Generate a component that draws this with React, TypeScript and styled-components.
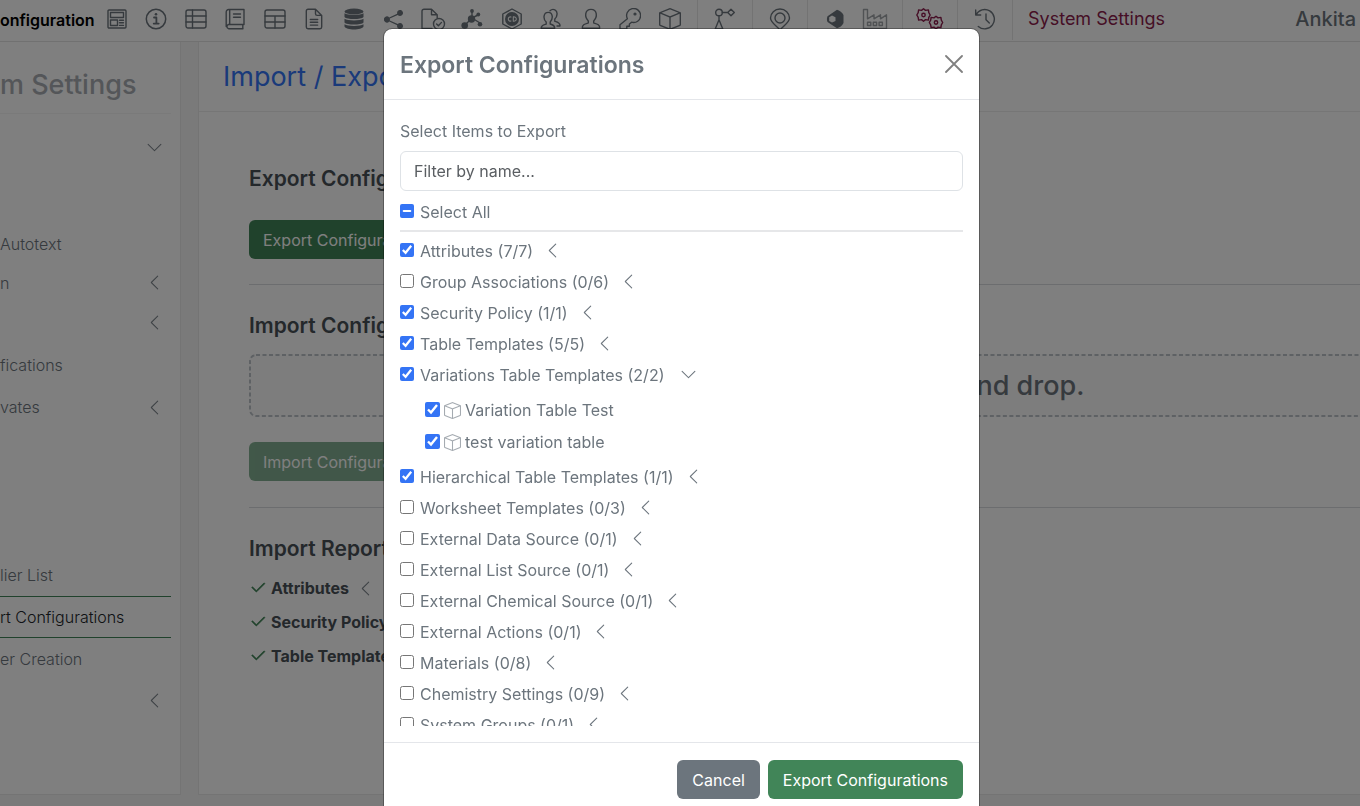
import React, { useEffect, useRef, useState } from 'react';
import styled, { createGlobalStyle } from 'styled-components';
import { BsBox, BsCheck2, BsChevronDown, BsChevronLeft, BsShareFill } from 'react-icons/bs';

const c = {
  text: '#6c757d',
  dark: '#495057',
  green: '#418558',
  blue: '#3474f5',
  maroon: '#8c1d4c',
  line: '#e4e6ea',
};

const GlobalStyle = createGlobalStyle`
  *, *::before, *::after { box-sizing: border-box; }
  html, body { margin: 0; height: 100%; overflow: hidden; }
  body { font-family: Inter, "Liberation Sans", sans-serif; font-size: 16px; line-height: 24px; color: ${c.text}; background: #f5f5f5; }
  #root { height: 100%; }
  button, input { font: inherit; }
  h1, h2, h3, p, ul { margin: 0; padding: 0; }
  ul { list-style: none; }
`;

const Page = styled.div`
  display: flex;
  flex-direction: column;
  height: 100vh;
  overflow: hidden;
`;

const TopBar = styled.header`
  display: flex;
  align-items: flex-start;
  height: 42px;
  flex: none;
  background: #fff;
  border-bottom: 1px solid #e3e3e3;
`;

const Brand = styled.strong`
  width: 97px;
  padding-top: 8px;
  font-size: 16px;
  font-weight: 600;
  color: #000;
  white-space: nowrap;
`;

const IconGroup = styled.nav<{ $pad?: number }>`
  display: flex;
  height: 40px;
  padding: 0 ${p => p.$pad ?? 0}px;
  border-right: 1px solid #e6e6e6;
`;

const ToolGroup = styled(IconGroup)`
  width: 601px;
  flex: none;
  justify-content: space-between;
  padding-right: 8px;
`;

const IconButton = styled.button<{ $color?: string; $width?: number }>`
  display: flex;
  align-items: center;
  justify-content: center;
  width: ${p => p.$width ?? 39}px;
  height: 38px;
  padding: 0;
  border: 0;
  background: none;
  color: ${p => p.$color ?? c.text};
  flex: none;
`;

const SectionName = styled.a`
  padding: 7px 0 0 15px;
  font-size: 18px;
  color: ${c.maroon};
  text-decoration: none;
`;

const UserName = styled.span`
  margin-left: auto;
  padding: 7px 4px 0 0;
  font-size: 20px;
  font-weight: 500;
`;

const Columns = styled.div`
  display: flex;
  flex: 1;
  gap: 17px;
  padding-bottom: 11px;
  min-height: 0;
`;

const Sidebar = styled.aside`
  width: 181px;
  flex: none;
  background: #fff;
  border: solid #e9e9e9;
  border-width: 0 1px 1px 0;
  overflow: hidden;
`;

const SidebarTitle = styled.h2`
  height: 72px;
  margin-right: 9px;
  padding-top: 26px;
  border-bottom: 1px solid #f4f4f4;
  font-size: 27px;
  line-height: 34px;
  font-weight: 500;
  color: #a9adb3;
  white-space: nowrap;
`;

const SideRow = styled.li<{ $height?: number; $active?: boolean }>`
  display: flex;
  align-items: center;
  justify-content: space-between;
  height: ${p => p.$height ?? 42}px;
  margin-right: 9px;
  padding-right: 8px;
  border: solid ${p => (p.$active ? c.green : 'transparent')};
  border-width: 1px 0;
  white-space: nowrap;
`;

const SideLink = styled.a<{ $active?: boolean }>`
  font-weight: 300;
  color: ${p => (p.$active ? '#212529' : c.text)};
  text-decoration: none;
`;

const Toggle = styled.button`
  display: inline-flex;
  align-items: center;
  margin-left: auto;
  padding: 0;
  border: 0;
  background: none;
  color: #7d858c;
`;

const Main = styled.main`
  flex: 1;
  min-width: 0;
  background: #fff;
  border: solid #e9e9e9;
  border-width: 0 0 1px 1px;
`;

const PageTitle = styled.h1`
  height: 70px;
  padding: 18px 24px 0;
  border-bottom: 1px solid #ececec;
  font-size: 27px;
  line-height: 34px;
  font-weight: 400;
  color: ${c.blue};
`;

const Content = styled.div`
  padding: 0 0 0 50px;
`;

const Section = styled.section<{ $top: number; $height: number; $last?: boolean }>`
  height: ${p => p.$height}px;
  padding-top: ${p => p.$top}px;
  border-bottom: ${p => (p.$last ? 0 : 1)}px solid #d9dbde;
`;

const SectionTitle = styled.h3<{ $space: number }>`
  margin-bottom: ${p => p.$space}px;
  font-size: 21px;
  line-height: 26px;
  font-weight: 600;
  color: ${c.dark};
`;

const Button = styled.button<{ $color?: string }>`
  height: 39px;
  padding: 0 14px;
  border: 0;
  border-radius: 6px;
  background: ${p => p.$color ?? c.green};
  color: #fff;
  white-space: nowrap;
  &:disabled { opacity: 0.65; }
`;

const DropZone = styled.div`
  display: flex;
  align-items: center;
  justify-content: center;
  height: 63px;
  margin: 0 -78px 25px 0;
  border-radius: 6px;
  background: #fafafa url("data:image/svg+xml,%3Csvg xmlns='http://www.w3.org/2000/svg' width='100%25' height='100%25'%3E%3Crect x='1' y='1' width='100%25' height='61' rx='6' fill='none' stroke='%23bcc2c8' stroke-width='2' stroke-dasharray='4 2.5'/%3E%3C/svg%3E");
  font-size: 27px;
  font-weight: 500;
`;

const ReportRow = styled.li`
  display: flex;
  align-items: center;
  height: 34px;
  gap: 4px;
  font-weight: 700;
  color: ${c.dark};
`;

const Tick = styled(BsCheck2)`
  color: ${c.green};
  stroke: ${c.green};
  stroke-width: 0.6px;
`;

const ReportToggle = styled(Toggle)`
  margin-left: 4px;
`;

const Backdrop = styled.div`
  position: fixed;
  inset: 0;
  display: flex;
  align-items: flex-start;
  justify-content: center;
  padding: 28px 0 0 3px;
  background: rgba(0, 0, 0, 0.5);
  overflow: hidden;
`;

const Dialog = styled.div`
  width: 597px;
  flex: none;
  border: 1px solid rgba(0, 0, 0, 0.3);
  border-radius: 9px;
  background: #fff;
  background-clip: padding-box;
`;

const DialogHeader = styled.div`
  display: flex;
  align-items: center;
  justify-content: space-between;
  height: 71px;
  padding: 0 16px;
  border-bottom: 1px solid ${c.line};
`;

const DialogTitle = styled.h2`
  padding-top: 2px;
  font-size: 23px;
  line-height: 32px;
  font-weight: 600;
`;

const CloseButton = styled.button`
  display: flex;
  padding: 0;
  border: 0;
  background: none;
  color: #808080;
`;

const DialogBody = styled.div`
  padding: 19px 16px 16px;
`;

const FieldLabel = styled.label`
  display: block;
  margin-bottom: 8px;
`;

const Filter = styled.input`
  display: block;
  width: 100%;
  height: 40px;
  padding: 0 13px;
  border: 1px solid #dee2e6;
  border-radius: 6px;
  background: #fff;
  outline: 0;
  &::placeholder { color: #5a5e62; opacity: 1; }
`;

const SelectAll = styled.div`
  display: flex;
  height: 41px;
  padding-top: 9px;
  border-bottom: 2px solid #e6e7e9;
`;

const CheckLabel = styled.label<{ $nested?: boolean }>`
  display: flex;
  align-items: center;
  height: 24px;
  gap: ${p => (p.$nested ? 4 : 6)}px;
  white-space: nowrap;
  svg { color: #a5abb1; }
`;

const Check = styled.input<{ $size?: number }>`
  width: ${p => p.$size ?? 14}px;
  height: ${p => p.$size ?? 14}px;
  margin: 0 0 2px;
  flex: none;
  accent-color: #3474f5;
`;

const Tree = styled.ul`
  height: calc(100vh - 312px);
  min-height: 200px;
  padding-top: 3px;
  overflow: hidden;
`;

const TreeRow = styled.div<{ $open?: boolean }>`
  display: flex;
  align-items: center;
  height: 31px;
  gap: ${p => (p.$open ? 16 : 11)}px;
`;

const TreeToggle = styled(Toggle)`
  margin: 0;
  color: ${c.text};
`;

const SubTree = styled.ul`
  padding: 4px 0 3px 25px;
`;

const SubRow = styled.li`
  display: flex;
  align-items: center;
  height: 32px;
`;

const DialogFooter = styled.div`
  display: flex;
  justify-content: flex-end;
  gap: 8px;
  padding: 17px 16px;
  border-top: 1px solid ${c.line};
  ${Button} { padding: 0 15px; }
`;

type GlyphProps = { w?: number; h?: number; children: React.ReactNode };
const Glyph = ({ w = 22, h = 22, children }: GlyphProps) => (
  <svg width={w} height={h} viewBox={`0 0 ${w} ${h}`} fill="none" stroke="currentColor" strokeWidth="1.4" strokeLinejoin="round" strokeLinecap="round" aria-hidden="true">
    {children}
  </svg>
);

const tools: { name: string; icon: React.ReactNode }[] = [
  { name: 'Forms', icon: <Glyph><rect x="2" y="2" width="18" height="18" rx="1" /><rect x="4.5" y="4.5" width="13" height="5" /><rect x="4.5" y="12" width="7" height="5.5" /><path d="M13.5 12.2h4M13.5 14.8h4M13.5 17.4h4" /></Glyph> },
  { name: 'Information', icon: <Glyph><circle cx="11" cy="11" r="9.7" strokeWidth="1.5" /><path d="M9 9.5h2.4v6M8.7 15.6h5" strokeWidth="1.8" /><circle cx="11" cy="6.2" r="1.3" fill="currentColor" stroke="none" /></Glyph> },
  { name: 'Attributes', icon: <Glyph><rect x="1" y="2" width="20" height="18" rx="2" /><path d="M7.5 2v18M1 8h20M1 14h20" /></Glyph> },
  { name: 'Notebook', icon: <Glyph><path d="M19 16.5H4.5a2.2 2.2 0 0 0 0 4.2H19M2.2 18.5V4a2.5 2.5 0 0 1 2.5-2.5H20v15h-1.2v4M5.7 1.5v15M9.5 6h7M9.5 9.3h7" /></Glyph> },
  { name: 'Tables', icon: <Glyph><rect x="1" y="2" width="20" height="18" rx="2" /><path d="M1 8h20M1 14h20M11 8v12" /></Glyph> },
  { name: 'Documents', icon: <Glyph><path d="M12.5 1.2H5a1.7 1.7 0 0 0-1.7 1.7v16.2A1.7 1.7 0 0 0 5 20.8h12a1.7 1.7 0 0 0 1.7-1.7V7.4l-6.2-6.2v4.5a1.7 1.7 0 0 0 1.7 1.7h4.5M7.3 11.5h7.4M7.3 14.3h7.4M7.3 17.1h7.4" /></Glyph> },
  { name: 'Data', icon: <Glyph><g fill="currentColor" stroke="none"><ellipse cx="11" cy="3.5" rx="9.5" ry="3" /><path d="M1.5 5.3c3 2.3 16 2.3 19 0V9c-2 2.7-17 2.7-19 0zM1.5 10.8c3 2.3 16 2.3 19 0v3.6c-2 2.7-17 2.7-19 0zM1.5 16.2c3 2.3 16 2.3 19 0v2.3c-1.5 3.9-17.5 3.9-19 0z" /></g></Glyph> },
  { name: 'Share', icon: <BsShareFill size={19} /> },
  { name: 'Approvals', icon: <Glyph w={26}><path d="M12 20.5H2V3.2a2 2 0 0 1 2-2h7.5l5.7 5.6v3M11.5 1.2v5.6h5.7" /><circle cx="19" cy="16" r="5.5" /><path d="m16.6 16 1.8 1.8 3.1-3.4" /></Glyph> },
  { name: 'Chemistry', icon: <Glyph><path d="m11 10-7 7M11 10l8 5M11 10V3M11 10l6-3" /><g fill="currentColor" stroke="none"><circle cx="10.5" cy="11" r="3.7" /><circle cx="3.7" cy="17.5" r="3.3" /><circle cx="19" cy="16.3" r="2.3" /><circle cx="11" cy="3" r="1.9" /><circle cx="17.3" cy="6.5" r="1.9" /></g></Glyph> },
  { name: 'Compounds', icon: <Glyph><path d="m11 1 9.2 5v10L11 21l-9.2-5V6z" /><circle cx="11" cy="11" r="7" fill="currentColor" stroke="none" /><path d="M10 9a2.1 2.1 0 1 0 0 4M12.3 8.8v4.4c4 .4 4-4.8 0-4.4z" stroke="#fff" strokeWidth="1.1" /></Glyph> },
  { name: 'Groups', icon: <Glyph><path d="M1.2 20.3h13.5c.3-3-2-3.4-4.5-4.3v-2c3-3 3-9.6-2-9.6s-5.3 6.600-2 9.600v2c-2.700.9-5.300 1.300-5 4.300zM10 2.800c3-3 7.600-.8 7 3.600-.1 2.500-1 3.700-2.200 4.600v2.300c2.800.8 5.600 1.400 5.200 4.700h-3" /></Glyph> },
  { name: 'Users', icon: <Glyph><path d="M2.300 20.300h17.400c.3-3.600-2.500-4.300-6-5.400v-2c4-3.800 3.600-11.500-2.700-11.500s-6.700 7.700-2.700 11.500v2c-3.500 1.100-6.300 1.800-6 5.400z" /></Glyph> },
  { name: 'Permissions', icon: <Glyph><path d="M8.400 10.700a7 7 0 1 1 4.200 3.500L10.400 16v2.300H7.800v2.700H1v-4.300z" /><circle cx="16" cy="6" r="0.900" /></Glyph> },
  { name: 'Materials', icon: <BsBox size={22} /> },
];

const Lifecycle = () => <Glyph><circle cx="5" cy="4.500" r="3.300" /><path d="M8.300 4.500h5.500M17 1.200l3.300 3.300L17 7.800l-3.300-3.300zM5 7.800v4M5 11.800 1.200 21h7.600z" /></Glyph>;
const Pin = () => <Glyph><path d="M11 22C8 18 1.500 14.500 1.500 10a9.500 9 0 0 1 19 0c0 4.500-6.500 8-9.500 12z" /><circle cx="11" cy="10" r="5" /></Glyph>;
const Gem = () => <Glyph><path fill="currentColor" stroke="none" fillRule="evenodd" d="M3.500 8.300 13 1.700c2.500.5 5.500 2.800 6.500 5.300v8c-1 2.500-4 4.800-6.500 5.300L3.500 14c-.8-1.800-.8-3.900 0-5.700zM8 7.600 5.200 9.300v3.600L8 14.600l3.500-1.700V9.300z" /></Glyph>;
const Factory = () => <Glyph w={26}><path d="M1.500 20.500v-19h4v9.300l6.500-4v4l6.500-4v4l6-4v13.700zM5.500 14.200h3.300v3.300H5.500zM11.300 14.200h3.300v3.300h-3.300zM17.100 14.200h3.300v3.300h-3.300z" /></Glyph>;
const Cog = () => <><path d="m0-6.200 2 1.600 2.900-.5.400 2.800 1.400 2.300-1.400 2.300-.4 2.800-2.900-.5L0 6.200l-2-1.600-2.900.5-.4-2.800L-6.700 0l1.400-2.300.4-2.800 2.900.5z" /><circle r="1.700" /></>;
const Gears = () => <Glyph w={28}><g transform="translate(7.500 7)"><Cog /></g><g transform="translate(20 14.500)"><Cog /></g></Glyph>;
const History = () => <Glyph><path d="M1.700 2v5h5M2 6.800A9.700 9.700 0 1 1 4.300 18.500M12 6v5.700l3.300 3.400" /></Glyph>;

const sideRows: { label?: string; height?: number; toggle?: 'open' | 'closed'; active?: boolean }[] = [
  { height: 67, toggle: 'open' },
  { height: 42 },
  { label: 'Autotext' },
  { label: 'n', toggle: 'closed', height: 35 },
  { toggle: 'closed', height: 44 },
  { label: 'fications' },
  { label: 'vates', toggle: 'closed' },
  { height: 126 },
  { label: 'lier List' },
  { label: 'rt Configurations', active: true },
  { label: 'er Creation' },
  { toggle: 'closed', height: 40 },
];

type Item = { name: string; total: number; on?: boolean; children?: string[] };
const items: Item[] = [
  { name: 'Attributes', total: 7, on: true },
  { name: 'Group Associations', total: 6 },
  { name: 'Security Policy', total: 1, on: true },
  { name: 'Table Templates', total: 5, on: true },
  { name: 'Variations Table Templates', total: 2, on: true, children: ['Variation Table Test', 'test variation table'] },
  { name: 'Hierarchical Table Templates', total: 1, on: true },
  { name: 'Worksheet Templates', total: 3 },
  { name: 'External Data Source', total: 1 },
  { name: 'External List Source', total: 1 },
  { name: 'External Chemical Source', total: 1 },
  { name: 'External Actions', total: 1 },
  { name: 'Materials', total: 8 },
  { name: 'Chemistry Settings', total: 9 },
  { name: 'System Groups', total: 1 },
];

function ExportDialog() {
  const all = useRef<HTMLInputElement>(null);
  const [checked, setChecked] = useState(() => items.map(i => !!i.on));
  const count = checked.filter(Boolean).length;
  useEffect(() => {
    if (all.current) all.current.indeterminate = count > 0 && count < items.length;
  }, [count]);
  const toggle = (index: number) => setChecked(list => list.map((v, i) => (i === index ? !v : v)));

  return (
    <Backdrop>
      <Dialog role="dialog" aria-modal="true" aria-labelledby="export-title">
        <DialogHeader>
          <DialogTitle id="export-title">Export Configurations</DialogTitle>
          <CloseButton aria-label="Close">
            <svg width="18" height="18" viewBox="0 0 18 18" stroke="currentColor" strokeWidth="1.8" strokeLinecap="round"><path d="m1 1 16 16M17 1 1 17" /></svg>
          </CloseButton>
        </DialogHeader>
        <DialogBody>
          <FieldLabel htmlFor="filter">Select Items to Export</FieldLabel>
          <Filter id="filter" type="text" placeholder="Filter by name..." />
          <SelectAll>
            <CheckLabel>
              <Check ref={all} type="checkbox" checked={count === items.length} onChange={e => setChecked(items.map(() => e.target.checked))} />
              Select All
            </CheckLabel>
          </SelectAll>
          <Tree>
            {items.map((item, i) => (
              <li key={item.name}>
                <TreeRow $open={!!item.children}>
                  <CheckLabel>
                    <Check type="checkbox" checked={checked[i]} onChange={() => toggle(i)} />
                    {`${item.name} (${checked[i] ? item.total : 0}/${item.total})`}
                  </CheckLabel>
                  <TreeToggle aria-label={`Toggle ${item.name}`}>
                    {item.children ? <BsChevronDown size={17} /> : <BsChevronLeft size={17} />}
                  </TreeToggle>
                </TreeRow>
                {item.children && (
                  <SubTree>
                    {item.children.map(child => (
                      <SubRow key={child}>
                        <CheckLabel $nested>
                          <Check $size={15} type="checkbox" defaultChecked />
                          <BsBox size={17} />
                          {child}
                        </CheckLabel>
                      </SubRow>
                    ))}
                  </SubTree>
                )}
              </li>
            ))}
          </Tree>
        </DialogBody>
        <DialogFooter>
          <Button $color="#6c757d">Cancel</Button>
          <Button>Export Configurations</Button>
        </DialogFooter>
      </Dialog>
    </Backdrop>
  );
}

export default function App() {
  return (
    <>
      <GlobalStyle />
      <Page>
        <TopBar>
          <Brand>onfiguration</Brand>
          <ToolGroup>
            {tools.map(tool => <IconButton key={tool.name} aria-label={tool.name}>{tool.icon}</IconButton>)}
          </ToolGroup>
          <IconGroup><IconButton $width={54} aria-label="Lifecycles"><Lifecycle /></IconButton></IconGroup>
          <IconGroup><IconButton $width={54} aria-label="Locations"><Pin /></IconButton></IconGroup>
          <IconGroup $pad={7}>
            <IconButton $width={40} aria-label="Inventory"><Gem /></IconButton>
            <IconButton $width={40} $color="#a0a4a8" aria-label="Manufacturing"><Factory /></IconButton>
          </IconGroup>
          <IconGroup><IconButton $width={54} $color={c.maroon} aria-label="System settings"><Gears /></IconButton></IconGroup>
          <IconGroup><IconButton $width={54} aria-label="History"><History /></IconButton></IconGroup>
          <SectionName href="#settings">System Settings</SectionName>
          <UserName>Ankita</UserName>
        </TopBar>
        <Columns>
          <Sidebar>
            <SidebarTitle>m Settings</SidebarTitle>
            <ul>
              {sideRows.map((row, i) => (
                <SideRow key={i} $height={row.height} $active={row.active}>
                  {row.label && <SideLink href="#item" $active={row.active}>{row.label}</SideLink>}
                  {row.toggle && (
                    <Toggle aria-label="Toggle section">
                      {row.toggle === 'open' ? <BsChevronDown size={17} /> : <BsChevronLeft size={17} />}
                    </Toggle>
                  )}
                </SideRow>
              ))}
            </ul>
          </Sidebar>
          <Main>
            <PageTitle>Import / Export Configurations</PageTitle>
            <Content>
              <Section $top={54} $height={173}>
                <SectionTitle $space={28}>Export Configurations</SectionTitle>
                <Button>Export Configurations</Button>
              </Section>
              <Section $top={28} $height={223}>
                <SectionTitle $space={15}>Import Configurations</SectionTitle>
                <DropZone>Click to select a file or drag and drop.</DropZone>
                <Button disabled>Import Configurations</Button>
              </Section>
              <Section $top={28} $height={180} $last>
                <SectionTitle $space={9}>Import Report</SectionTitle>
                <ul>
                  {['Attributes', 'Security Policy', 'Table Templates'].map(name => (
                    <ReportRow key={name}>
                      <Tick size={18} />
                      {name}
                      <ReportToggle aria-label={`Toggle ${name}`}><BsChevronLeft size={17} /></ReportToggle>
                    </ReportRow>
                  ))}
                </ul>
              </Section>
            </Content>
          </Main>
        </Columns>
      </Page>
      <ExportDialog />
    </>
  );
}
